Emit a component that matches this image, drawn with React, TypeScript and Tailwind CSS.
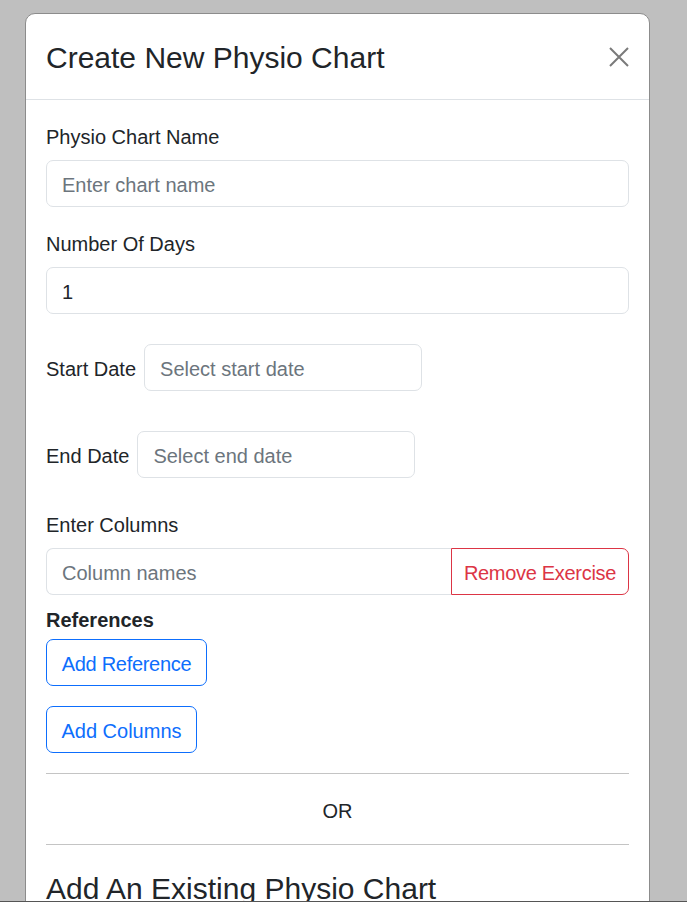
const font = "font-['Segoe_UI','Liberation_Sans',Arial,sans-serif]"

function Field({ label, placeholder, value }: { label: string; placeholder?: string; value?: string }) {
  return (
    <div className="mb-[20px]">
      <label className="mb-[10px] block h-[30px] pt-[2px] leading-[30px]">{label}</label>
      <input
        readOnly
        value={value}
        placeholder={placeholder}
        className="block h-[47px] w-full rounded-[7px] border border-[#dee2e6] px-[15px] pt-[3px] text-[20px] text-[#212529] outline-none placeholder:text-[#6c757d]"
      />
    </div>
  )
}

function DateRow({ label, placeholder, className }: { label: string; placeholder: string; className: string }) {
  return (
    <div className={`flex items-center gap-[8px] ${className}`}>
      <span className="pt-[2px] leading-[30px]">{label}</span>
      <input
        readOnly
        placeholder={placeholder}
        className="h-[47px] w-[278px] rounded-[7px] border border-[#dee2e6] px-[15px] pt-[3px] text-[20px] outline-none placeholder:text-[#6c757d]"
      />
    </div>
  )
}

export default function App() {
  return (
    <div className={`h-[902px] w-[687px] overflow-hidden border-b border-[#555] bg-[#bfbfbf] ${font}`}>
      <div className="ml-[25px] mt-[13px] w-[625px] rounded-t-[10px] border border-[#8c8c8c] bg-white text-[20px] text-[#212529]">
        {/* header */}
        <div className="flex h-[86px] items-center justify-between border-b border-[#dee2e6] px-[20px]">
          <h4 className="pt-[2px] text-[30px] font-medium leading-[36px]">Create New Physio Chart</h4>
          <button className="flex h-[20px] w-[20px] items-center justify-center" aria-label="Close">
            <svg width="20" height="20" viewBox="0 0 20 20" fill="none" stroke="#7a7a7a" strokeWidth="2">
              <path d="M1 1L19 19M19 1L1 19" />
            </svg>
          </button>
        </div>

        {/* body */}
        <div className="px-[20px] pt-[20px]">
          <Field label="Physio Chart Name" placeholder="Enter chart name" />
          <Field label="Number Of Days" value="1" />

          <DateRow label="Start Date" placeholder="Select start date" className="mt-[30px]" />
          <DateRow label="End Date" placeholder="Select end date" className="mt-[40px]" />

          <label className="mb-[10px] mt-[30px] block h-[30px] pt-[2px] leading-[30px]">Enter Columns</label>
          <div className="flex h-[47px]">
            <input
              readOnly
              placeholder="Column names"
              className="min-w-0 flex-1 rounded-l-[7px] border border-r-0 border-[#dee2e6] px-[15px] pt-[3px] text-[20px] outline-none placeholder:text-[#6c757d]"
            />
            <button className="w-[178px] rounded-r-[7px] border border-[#dc3545] pt-[3px] text-[20px] tracking-[-0.3px] text-[#dc3545]">
              Remove Exercise
            </button>
          </div>

          <div className="mt-[8px] h-[30px] pt-[2px] font-semibold leading-[30px]">References</div>
          <div className="mt-[6px] flex">
            <button className="h-[47px] w-[161px] rounded-[7px] border border-[#0d6efd] pt-[3px] text-[20px] tracking-[-0.3px] text-[#0d6efd]">
              Add Reference
            </button>
          </div>
          <div className="mt-[20px] flex">
            <button className="h-[47px] w-[151px] rounded-[7px] border border-[#0d6efd] pt-[3px] text-[20px] text-[#0d6efd]">
              Add Columns
            </button>
          </div>

          <hr className="mt-[20px] border-t border-[#c4c4c4]" />
          <div className="my-[20px] h-[30px] pt-[2px] text-center leading-[30px]">OR</div>
          <hr className="border-t border-[#c4c4c4]" />

          <h3 className="mt-[26px] text-[30px] font-medium leading-[36px]">Add An Existing Physio Chart</h3>
        </div>
      </div>
    </div>
  )
}
